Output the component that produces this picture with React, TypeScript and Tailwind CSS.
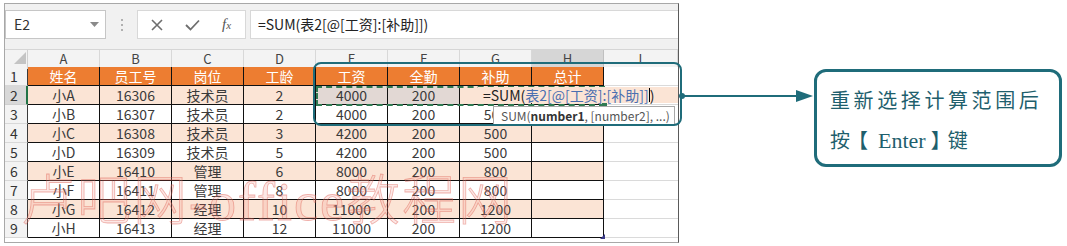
import React from "react";

const COLS = ["A", "B", "C", "D", "E", "F", "G", "H", "I"];
const HEAD = ["姓名", "员工号", "岗位", "工龄", "工资", "全勤", "补助", "总计"];
const DATA = [
  ["小A", "16306", "技术员", "2", "4000", "200", "", ""],
  ["小B", "16307", "技术员", "2", "4000", "200", "500", ""],
  ["小C", "16308", "技术员", "3", "4200", "200", "500", ""],
  ["小D", "16309", "技术员", "5", "4200", "200", "500", ""],
  ["小E", "16410", "管理", "6", "8000", "200", "800", ""],
  ["小F", "16411", "管理", "8", "8000", "200", "800", ""],
  ["小G", "16412", "经理", "10", "11000", "200", "1200", ""],
  ["小H", "16413", "经理", "12", "11000", "200", "1200", ""],
];

const GRID = "grid grid-cols-[23px_repeat(8,72px)_1fr]";

function FormulaBar() {
  return (
    <div className="h-[46px] bg-[#f1f1f1] flex items-start pt-[6px] border-b border-[#d6d6d6]">
      <div className="w-[101px] h-[29px] bg-white border border-[#c6c6c6] flex items-center justify-between pl-[8px] pr-[6px] text-[14px] text-[#333]">
        <span>E2</span>
        <svg width="9" height="6" viewBox="0 0 9 6"><path d="M0 0 L9 0 L4.5 5 Z" fill="#8a8a8a" /></svg>
      </div>
      <div className="w-[31px] h-[29px] flex items-center justify-center">
        <svg width="4" height="14" viewBox="0 0 4 14">
          <rect x="1" y="1" width="2" height="2" fill="#b0b0b0" />
          <rect x="1" y="6" width="2" height="2" fill="#b0b0b0" />
          <rect x="1" y="11" width="2" height="2" fill="#b0b0b0" />
        </svg>
      </div>
      <div className="w-[109px] h-[29px] bg-white border border-[#d8d8d8] flex items-center pl-[13px] gap-[22px] text-[#6e6e6e]">
        <svg width="12" height="12" viewBox="0 0 12 12"><path d="M1 1 L11 11 M11 1 L1 11" stroke="#6e6e6e" strokeWidth="1.6" /></svg>
        <svg width="15" height="12" viewBox="0 0 15 12"><path d="M1 6 L5.5 10.5 L14 1.5" stroke="#6e6e6e" strokeWidth="1.8" fill="none" /></svg>
        <span className="text-[15px] italic font-['Liberation_Serif',serif] text-[#555]">f<span className="text-[11px]">x</span></span>
      </div>
      <div className="ml-[4px] flex-1 h-[29px] bg-white border-y border-l border-[#d8d8d8] flex items-center pl-[7px] text-[14px] text-[#222]">
        =SUM(表2[@[工资]:[补助]])
      </div>
    </div>
  );
}

function ColHeader() {
  return (
    <div className={`${GRID} h-[17px] bg-[#f3f3f3] text-[13px] text-[#444] leading-[17px]`}>
      <div className="relative border-r border-[#d0d0d0]">
        <svg className="absolute left-[9px] top-[2px]" width="12" height="12" viewBox="0 0 12 12"><path d="M12 0 L12 12 L0 12 Z" fill="#c4c4c4" /></svg>
      </div>
      {COLS.map((c) => (
        <div
          key={c}
          className={
            c === "H"
              ? "text-center bg-[#d6d6d6] border-r border-[#c0c0c0] border-b-2 border-b-[#217346]"
              : "text-center border-r border-[#d8d8d8]"
          }
        >
          {c}
        </div>
      ))}
    </div>
  );
}

function Row({ n, cells, header }: { n: number; cells: string[]; header?: boolean }) {
  const band = header ? "" : n % 2 === 0 ? "bg-[#fbe4d5]" : "bg-white";
  return (
    <div className={`${GRID} h-[19px] text-[14px] leading-[18px]`}>
      <div
        className={
          n === 2
            ? "bg-[#d8d8d8] text-[#333] pl-[5px] border-b border-[#cfcfcf] border-r-2 border-r-[#217346]"
            : "bg-[#f3f3f3] text-[#333] pl-[5px] border-b border-[#d8d8d8] border-r border-r-[#3a3a3a]"
        }
      >
        {n}
      </div>
      {cells.map((t, i) => {
        let bg = header ? "bg-[#ed7d31] text-white" : `${band} text-[#3a3a3a]`;
        if (n === 2 && (i === 4 || i === 5)) bg = "bg-[#e2d8d4] text-[#3a3a3a]";
        return (
          <div key={i} className={`${bg} text-center border-r border-b border-[#111]`}>
            {t}
          </div>
        );
      })}
      <div className="bg-white border-b border-[#dadada]" />
    </div>
  );
}

function Excel() {
  return (
    <div className="relative ml-[4px] mt-[3px] w-[675px] h-[240px] border-l border-t border-b border-[#a8a8a8] border-r border-r-[#5a5a5a] bg-white">
      <FormulaBar />
      <ColHeader />
      <Row n={1} cells={HEAD} header />
      {DATA.map((r, i) => (
        <Row key={i} n={i + 2} cells={r} />
      ))}

      {/* watermark */}
      <div className="absolute left-[16px] top-[168px] text-[54px] leading-[60px] tracking-[2px] font-light whitespace-nowrap font-['Liberation_Serif','Noto_Sans_CJK_SC',serif] text-[rgba(240,150,140,0.22)] [-webkit-text-stroke:0.8px_rgba(220,80,70,0.42)] pointer-events-none">
        卢吧网-office教程网
      </div>

      {/* marching ants on referenced range */}
      <div className="absolute left-[311px] top-[82px] w-[289px] h-[20px] border-2 border-dashed border-[#2f7a52]" />
      <div className="absolute left-[597px] top-[98px] w-[5px] h-[5px] bg-[#2f7a52]" />

      {/* in-cell editor */}
      <div className="absolute left-[473px] top-[83px] w-[200px] h-[16px] bg-[#fbe4d5] flex items-center pl-[5px] text-[14px] text-[#222] leading-[16px] whitespace-nowrap">
        =SUM(<span className="text-[#4b6fb0]">表2[@[工资]:[补助]]</span>
        <span className="inline-block w-[1px] h-[14px] bg-black" />)
      </div>

      {/* tooltip */}
      <div className="absolute left-[488px] top-[102px] w-[182px] h-[19px] bg-white border border-[#a9a9a9] flex items-center pl-[7px] text-[12px] text-[#555] whitespace-nowrap">
        SUM(<b className="text-[#333]">number1</b>, [number2], ...)
      </div>

      {/* table resize handle */}
      <svg className="absolute left-[595px] top-[230px]" width="5" height="5" viewBox="0 0 5 5"><path d="M5 0 L5 5 L0 5 Z" fill="#3b3b8a" /></svg>

      {/* annotation rect */}
      <div className="absolute left-[308px] top-[58px] w-[369px] h-[64px] border-[2.5px] border-[#1f6c7a] rounded-[8px]" />
    </div>
  );
}

export default function App() {
  return (
    <div className="w-[1067px] h-[246px] bg-white flex items-start font-['Noto_Sans_CJK_SC',sans-serif] overflow-hidden">
      <Excel />
      <svg className="mt-[89px] -ml-[1px]" width="136" height="14" viewBox="0 0 136 14">
        <circle cx="4" cy="7" r="3" fill="#1f6c7a" />
        <line x1="4" y1="7" x2="122" y2="7" stroke="#1f6c7a" strokeWidth="2" />
        <path d="M118 1 L135 7 L118 13 Z" fill="#1f6c7a" />
      </svg>
      <div className="mt-[69px] w-[248px] h-[98px] border-[3px] border-[#1f6c7a] rounded-[12px] bg-white pl-[13px] pt-[9px] text-[20px] leading-[40px] text-[#1f5f6d] font-['Liberation_Serif','Noto_Sans_CJK_SC',serif]">
        <div className="tracking-[3.6px]">重新选择计算范围后</div>
        <div className="flex items-center">
          <span>按</span>
          <span className="-ml-[2px]">【</span>
          <span className="ml-[10px] text-[22px]">Enter</span>
          <span className="ml-[5px]">】</span>
          <span className="-ml-[3px]">键</span>
        </div>
      </div>
    </div>
  );
}
